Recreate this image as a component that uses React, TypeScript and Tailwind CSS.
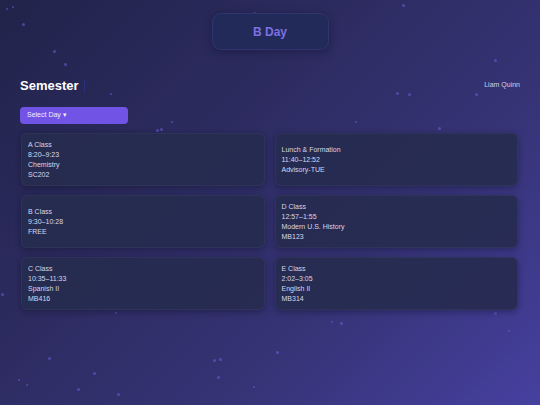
const stars: [number, number, number][] = [
  [6, 8, 1], [12, 6, 1], [22, 23, 1.5], [53, 50, 2], [64, 63, 2], [253, 12, 1.5],
  [402, 4, 1.5], [494, 59, 1.5], [110, 93, 1], [396, 92, 1.5], [475, 93, 1.5],
  [156, 129, 2], [171, 121, 1], [438, 127, 1.5], [355, 121, 1], [408, 93, 2],
  [1, 293, 1.5], [48, 357, 1.5], [93, 372, 1.5], [26, 384, 1], [18, 379, 1],
  [77, 388, 2], [117, 393, 2], [213, 359, 2], [217, 376, 1.5], [253, 386, 1],
  [276, 351, 1.5], [340, 322, 2], [331, 321, 1], [494, 312, 1.5], [508, 330, 1],
  [89, 307, 2], [115, 312, 1], [219, 358, 1.5], [160, 128, 1.5],
];

type Slot = { lines: string[] };

const left: Slot[] = [
  { lines: ["A Class", "8:20–9:23", "Chemistry", "SC202"] },
  { lines: ["B Class", "9:30–10:28", "FREE"] },
  { lines: ["C Class", "10:35–11:33", "Spanish II", "MB416"] },
];

const right: Slot[] = [
  { lines: ["Lunch & Formation", "11:40–12:52", "Advisory-TUE"] },
  { lines: ["D Class", "12:57–1:55", "Modern U.S. History", "MB123"] },
  { lines: ["E Class", "2:02–3:05", "English II", "MB314"] },
];

function Card({ slot }: { slot: Slot }) {
  return (
    <div className="flex h-[53px] flex-col justify-center rounded-md border border-white/[0.04] bg-[#262b4f]/90 px-[6px] text-[7px] leading-[10px] text-[#d6d8ec] shadow-[0_2px_6px_rgba(10,10,30,0.35)]">
      {slot.lines.map((l) => (
        <div key={l}>{l}</div>
      ))}
    </div>
  );
}

export default function App() {
  return (
    <div
      className="relative h-[405px] w-[540px] overflow-hidden bg-[linear-gradient(135deg,#21234a_0%,#2c2b5f_35%,#353374_65%,#46409f_100%)]"
      style={{ fontFamily: '"Liberation Sans", Arial, sans-serif' }}
    >
      {/* Stars */}
      {stars.map(([x, y, s], i) => (
        <span
          key={i}
          className="absolute rounded-full bg-[#6b5bd6]/60"
          style={{ left: x, top: y, width: s + 1, height: s + 1 }}
        />
      ))}

      <div className="relative flex flex-col px-[20px] pt-[13px]">
        {/* Day badge */}
        <div className="flex justify-center">
          <div className="flex h-[37px] w-[117px] items-center justify-center rounded-[9px] border border-[#343a78]/70 bg-[#222a5a] text-[12px] font-bold text-[#7d70e2] shadow-[0_2px_8px_rgba(10,10,40,0.4)]">
            B Day
          </div>
        </div>

        {/* Header row */}
        <div className="mt-[28px] flex items-center justify-between">
          <div className="flex items-center gap-[5px]">
            <span className="text-[13px] font-bold leading-[15px] text-white">Semester</span>
            <span className="h-[12px] w-[1px] bg-[#27307a]" />
          </div>
          <span className="text-[7px] text-[#cfd0e6]">Liam Quinn</span>
        </div>

        <button className="mt-[14px] flex h-[17px] w-[108px] items-center rounded-[4px] bg-[#7153e6] px-[7px] text-[7px] text-[#f2efff]">
          Select Day ▾
        </button>

        {/* Schedule grid */}
        <div className="mt-[9px] grid grid-cols-2 gap-x-[10px] gap-y-[9px] pl-px pr-[2px]">
          {[0, 1, 2].map((r) => (
            <div key={r} className="contents">
              <Card slot={left[r]} />
              <Card slot={right[r]} />
            </div>
          ))}
        </div>
      </div>
    </div>
  );
}
